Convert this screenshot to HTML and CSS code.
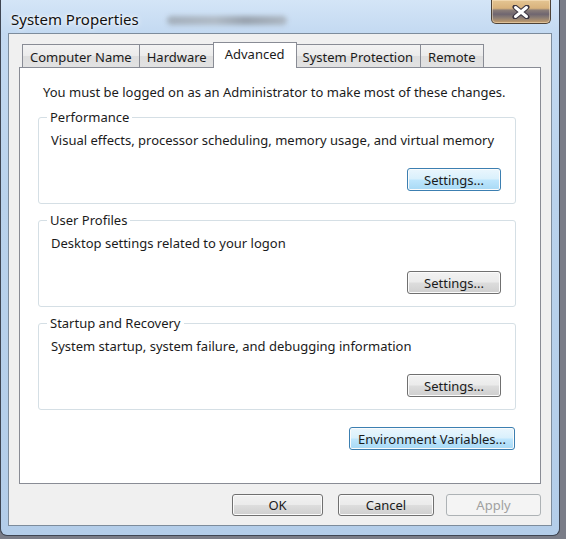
FILE: index.html
```html
<!DOCTYPE html>
<html lang="en">
<head>
<meta charset="utf-8">
<title>System Properties</title>
<link rel="stylesheet" href="styles.css">
</head>
<body>
<div class="window">
  <div class="titlebar">
    <span class="title">System Properties</span>
    <span class="smudge"></span>
    <button class="close" aria-label="Close">
      <svg width="20" height="14" viewBox="0 0 20 14">
        <path d="M4 2 L16 12 M16 2 L4 12" stroke="#3b3540" stroke-width="5" stroke-linecap="round"/>
        <path d="M4.5 2.5 L15.5 11.5 M15.5 2.5 L4.5 11.5" stroke="#ffffff" stroke-width="3" stroke-linecap="round"/>
      </svg>
    </button>
  </div>
  <div class="client">
    <div class="tabs">
      <div class="tab">Computer Name</div>
      <div class="tab">Hardware</div>
      <div class="tab active">Advanced</div>
      <div class="tab">System Protection</div>
      <div class="tab">Remote</div>
    </div>
    <div class="panel">
      <p class="note">You must be logged on as an Administrator to make most of these changes.</p>
      <div class="group">
        <span class="group-title">Performance</span>
        <p class="group-text">Visual effects, processor scheduling, memory usage, and virtual memory</p>
        <div class="group-actions"><button class="btn btn-focus">Settings...</button></div>
      </div>
      <div class="group">
        <span class="group-title">User Profiles</span>
        <p class="group-text">Desktop settings related to your logon</p>
        <div class="group-actions"><button class="btn">Settings...</button></div>
      </div>
      <div class="group">
        <span class="group-title">Startup and Recovery</span>
        <p class="group-text">System startup, system failure, and debugging information</p>
        <div class="group-actions"><button class="btn">Settings...</button></div>
      </div>
      <div class="env-row"><button class="btn btn-focus btn-env">Environment Variables...</button></div>
    </div>
    <div class="footer">
      <button class="btn btn-ok">OK</button>
      <button class="btn btn-cancel">Cancel</button>
      <button class="btn btn-apply" disabled>Apply</button>
    </div>
  </div>
</div>
</body>
</html>
```

FILE: styles.css
```css
* { box-sizing: border-box; }

html, body {
  margin: 0;
  padding: 0;
}

body {
  width: 566px;
  height: 539px;
  overflow: hidden;
  background: #7a7d88;
  font-family: "Noto Sans", "Open Sans", sans-serif;
  font-size: 13px;
  color: #1b1b1b;
}

.window {
  width: 560px;
  height: 536px;
  border: 1px solid #3e4552;
  border-top: none;
  border-radius: 0 0 7px 7px;
  background: linear-gradient(180deg, #d4e5f7 0px, #c3d9f1 34px, #b9d2ec 200px, #b3cde9 100%);
  display: flex;
  flex-direction: column;
}

.titlebar {
  height: 33px;
  display: flex;
  align-items: flex-start;
  padding-left: 10px;
}

.title {
  font-size: 15px;
  line-height: 20px;
  margin-top: 9px;
  color: #111;
  text-shadow: 0 0 6px #ffffff, 0 0 3px #ffffff;
}

.smudge {
  width: 120px;
  height: 9px;
  margin-top: 16px;
  margin-left: 28px;
  border-radius: 5px;
  background: linear-gradient(90deg, #9aa3ad, #aab2bb 40%, #8c939c 65%, #a5adb6);
  filter: blur(2.5px);
  opacity: 0.8;
}

.close {
  margin-left: auto;
  margin-right: 8px;
  width: 60px;
  height: 24px;
  padding: 0;
  border: 1px solid #4e4338;
  border-top: none;
  border-radius: 0 0 5px 5px;
  background: linear-gradient(180deg, #e4c593 0%, #d8b27c 36%, #8a7d78 44%, #6f6670 62%, #8e7f74 78%, #c9a06b 100%);
  display: flex;
  align-items: center;
  justify-content: center;
  box-shadow: inset 0 0 0 1px rgba(255, 240, 210, 0.45);
}

.client {
  margin-left: 7px;
  width: 544px;
  height: 493px;
  border: 1px solid #7d8c9c;
  background: #f0f0f0;
  padding: 8px 10px 0 10px;
  display: flex;
  flex-direction: column;
}

.tabs {
  display: flex;
  align-items: flex-end;
  height: 25px;
  padding-left: 3px;
  position: relative;
  z-index: 1;
}

.tab {
  height: 23px;
  padding: 1px 7px 0 7px;
  line-height: 22px;
  border: 1px solid #898c95;
  border-bottom: none;
  margin-right: -1px;
  background: linear-gradient(180deg, #f3f3f3 0%, #ebebeb 50%, #dedede 51%, #e2e2e2 100%);
  white-space: nowrap;
}

.tab.active {
  height: 26px;
  margin-bottom: -1px;
  padding: 0 11px;
  margin-left: -1px;
  margin-right: -2px;
  line-height: 22px;
  background: #ffffff;
  position: relative;
  z-index: 2;
}

.panel {
  height: 417px;
  border: 1px solid #898c95;
  background: #ffffff;
  padding: 16px 24px 0 18px;
}

.note {
  margin: 0 0 0 5px;
  line-height: 16px;
}

.group {
  position: relative;
  height: 87px;
  margin-top: 16px;
  border: 1px solid #d5dfe5;
  border-radius: 3px;
  padding: 14px 14px 0 12px;
}

.group:first-of-type {
  margin-top: 17px;
}

.group-title {
  position: absolute;
  top: -9px;
  left: 8px;
  padding: 0 3px;
  line-height: 16px;
  background: #ffffff;
}

.group-text {
  margin: 0;
  line-height: 16px;
}

.group-actions {
  display: flex;
  justify-content: flex-end;
  margin-top: 20px;
}

.btn {
  font-family: inherit;
  font-size: 13px;
  color: #1b1b1b;
  height: 23px;
  width: 94px;
  padding: 0;
  border: 1px solid #707070;
  border-radius: 3px;
  background: linear-gradient(180deg, #f2f2f2 0%, #ebebeb 48%, #dddddd 52%, #cfcfcf 100%);
  box-shadow: inset 0 0 0 1px #fbfbfb;
}

.btn-focus {
  border-color: #3c7fb1;
  background: linear-gradient(180deg, #eaf6fd 0%, #d9f0fc 48%, #bee6fd 52%, #a7d9f5 100%);
}

.env-row {
  display: flex;
  justify-content: flex-end;
  margin-top: 17px;
}

.btn-env {
  width: 166px;
  margin-right: 1px;
}

.footer {
  display: flex;
  justify-content: flex-end;
  margin-top: 10px;
}

.footer .btn {
  height: 22px;
}

.btn-ok { width: 91px; }
.btn-cancel { width: 96px; margin-left: 15px; }
.btn-apply {
  width: 95px;
  margin-left: 12px;
  color: #a0a0a0;
  border-color: #adb2b5;
  background: #f4f4f4;
  box-shadow: none;
}
```
